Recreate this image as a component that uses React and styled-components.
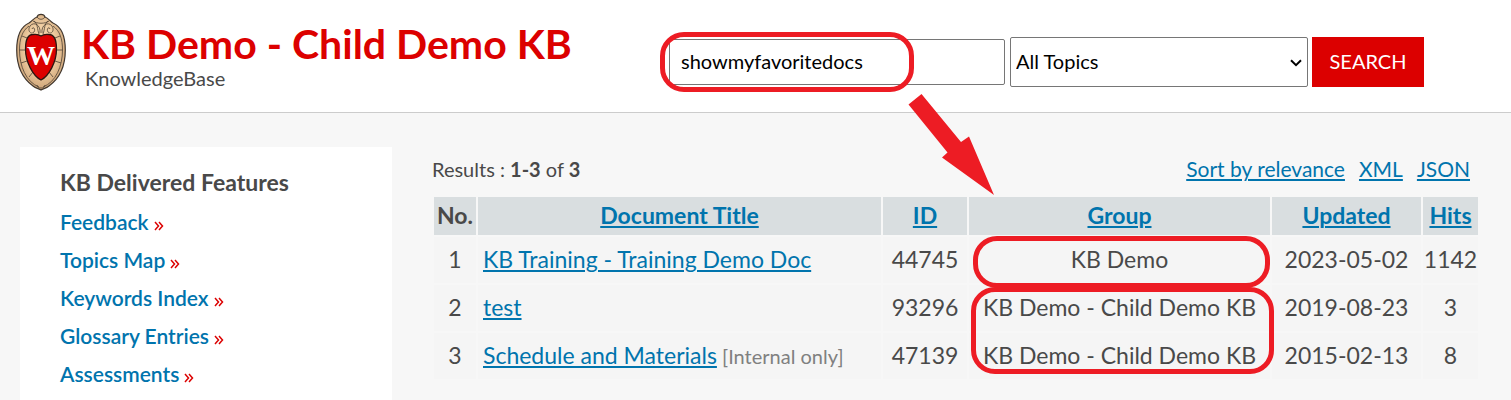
import React, { useState } from 'react'
import styled, { createGlobalStyle } from 'styled-components'

const fonts = {
  primary: "'Lato', 'Liberation Sans', sans-serif",
  serif: "'Liberation Serif', serif",
}

const colors = {
  red: '#dc0000',
  marker: '#ed1c24',
  link: '#0074ad',
  text: '#494949',
  page: '#f7f7f7',
}

const features = [
  'Feedback',
  'Topics Map',
  'Keywords Index',
  'Glossary Entries',
  'Assessments',
]

const docs = [
  {
    title: 'KB Training - Training Demo Doc',
    id: '44745',
    group: 'KB Demo',
    updated: '2023-05-02',
    hits: '1142',
    mark: 'single',
  },
  {
    title: 'test',
    id: '93296',
    group: 'KB Demo - Child Demo KB',
    updated: '2019-08-23',
    hits: '3',
    mark: 'double',
  },
  {
    title: 'Schedule and Materials',
    internal: true,
    id: '47139',
    group: 'KB Demo - Child Demo KB',
    updated: '2015-02-13',
    hits: '8',
  },
]

const App = () => {
  const [query, setQuery] = useState('showmyfavoritedocs')

  return (
    <>
      <GlobalStyle />
      <Header>
        <Brand>
          <Crest />
          <BrandText>
            <SiteTitle>KB Demo - Child Demo KB</SiteTitle>
            <SiteSubtitle>KnowledgeBase</SiteSubtitle>
          </BrandText>
        </Brand>
        <SearchForm onSubmit={(e) => e.preventDefault()}>
          <SearchField>
            <SearchInput
              type="text"
              aria-label="Search term"
              value={query}
              onChange={(e) => setQuery(e.target.value)}
            />
            <SearchMark />
            <Arrow />
          </SearchField>
          <TopicField>
            <TopicSelect aria-label="Topics" defaultValue="all">
              <option value="all">All Topics</option>
            </TopicSelect>
            <Chevron viewBox="0 0 12 8" aria-hidden="true">
              <path d="M1 1.3 6 6.2 11 1.3" />
            </Chevron>
          </TopicField>
          <SearchButton type="submit">SEARCH</SearchButton>
        </SearchForm>
      </Header>
      <Body>
        <Sidebar>
          <SidebarTitle>KB Delivered Features</SidebarTitle>
          <FeatureList>
            {features.map((name) => (
              <li key={name}>
                <FeatureLink href="#">
                  {name}
                  <DoubleArrow />
                </FeatureLink>
              </li>
            ))}
          </FeatureList>
        </Sidebar>
        <Results>
          <ResultsBar>
            <span>
              Results : <b>1-3</b> of <b>3</b>
            </span>
            <ResultsLinks>
              <Link href="#">Sort by relevance</Link>
              <Link href="#">XML</Link>
              <Link href="#">JSON</Link>
            </ResultsLinks>
          </ResultsBar>
          <DocTable>
            <colgroup>
              <Col $width={42} />
              <Col />
              <Col $width={84} />
              <Col $width={301} />
              <Col $width={149} />
              <Col $width={55} />
            </colgroup>
            <thead>
              <tr>
                <HeadCell>No.</HeadCell>
                {['Document Title', 'ID', 'Group', 'Updated', 'Hits'].map(
                  (label) => (
                    <HeadCell key={label}>
                      <Link href="#">{label}</Link>
                    </HeadCell>
                  )
                )}
              </tr>
            </thead>
            <tbody>
              {docs.map((doc, index) => (
                <tr key={doc.id}>
                  <Cell>{index + 1}</Cell>
                  <Cell $align="left">
                    <Link href="#">{doc.title}</Link>
                    {doc.internal && <Internal> [Internal only]</Internal>}
                  </Cell>
                  <Cell>{doc.id}</Cell>
                  <Cell>
                    {doc.group}
                    {doc.mark === 'single' && <GroupMark />}
                    {doc.mark === 'double' && <GroupPairMark />}
                  </Cell>
                  <Cell>{doc.updated}</Cell>
                  <Cell>{doc.hits}</Cell>
                </tr>
              ))}
            </tbody>
          </DocTable>
        </Results>
      </Body>
    </>
  )
}

export default App

const Crest = () => (
  <CrestSvg viewBox="0 0 50 80" role="img" aria-label="University crest">
    <defs>
      <radialGradient id="stone" cx="50%" cy="45%" r="60%">
        <stop offset="0.5" stopColor="#f0cfa4" />
        <stop offset="1" stopColor="#c69a6d" />
      </radialGradient>
    </defs>
    <path
      d="M25 78C23 76.500 20 76.500 17 74C6 66 0.700 53 0.700 38C0.700 26 4 15 13 11C16 9 18 6 21 5C22 1.500 28 1.500 29 5C32 6 34 9 37 11C46 15 49.300 26 49.300 38C49.300 53 44 66 33 74C30 76.500 27 76.500 25 78Z"
      fill="url(#stone)"
      stroke="#42382f"
      strokeWidth="1.2"
    />
    <g fill="none" stroke="#4d4034" strokeWidth="0.8">
      <path d="M23 75C10 70 3.500 54 3.500 38C3.500 27 6 19 13 14M27 75C40 70 46.500 54 46.500 38C46.500 27 44 19 37 14" />
      <path d="M21 5C23 8 27 8 29 5M17 9C21 12 29 12 33 9M21 73C21 77 29 77 29 73" />
      <path d="M24 21C25 13 18 9 14 14C11 19 15 23 18 20C20 17 17 14 16 17M23 22C21 17 22 12 18 9" />
      <path d="M26 21C25 13 32 9 36 14C39 19 35 23 32 20C30 17 33 14 34 17M27 22C29 17 28 12 32 9" />
      <path d="M6 24 11 26M3.500 38H9M5 51 11 49M13 65 17 60M44 24 39 26M46.500 38H41M45 51 39 49M37 65 33 60" />
    </g>
    <path
      d="M25 68C17 64 9.500 50 9.500 37C9.500 27 12 22.500 17 22.500C21 22 23 22.500 25 24C27 22.500 29 22 33 22.500C38 22.500 40.500 27 40.500 37C40.500 50 33 64 25 68Z"
      fill="#dc0000"
      stroke="#2d1712"
      strokeWidth="1.3"
    />
    <CrestLetter x="25" y="53" textAnchor="middle">
      W
    </CrestLetter>
  </CrestSvg>
)

const DoubleArrow = () => (
  <DoubleArrowSvg viewBox="0 0 10 10" aria-hidden="true">
    <path d="M1 1 4.500 5 1 9M5 1 8.500 5 5 9" />
  </DoubleArrowSvg>
)

const Arrow = () => (
  <ArrowSvg viewBox="0 0 86 101" aria-hidden="true">
    <path d="M13.500 0 53 48 61 42.500 86 101 34 63.500 39.500 58.500 0.500 10.500Z" />
  </ArrowSvg>
)

const GlobalStyle = createGlobalStyle`
  * {
    box-sizing: border-box;
  }

  body {
    margin: 0;
    background: ${colors.page};
    color: ${colors.text};
    font-family: ${fonts.primary};
    font-size: 20px;
    line-height: 24px;
  }
`

const Header = styled.header`
  display: grid;
  grid-template-columns: 653fr 842fr;
  align-items: start;
  padding: 12px 0 20px 16px;
  background: #fff;
  border-bottom: 1px solid #ccc;
`

const Brand = styled.div`
  display: flex;
  gap: 15px;
`

const CrestSvg = styled.svg`
  flex: none;
  width: 50px;
  height: 80px;
`

const CrestLetter = styled.text`
  fill: #fff;
  font-family: ${fonts.serif};
  font-size: 28px;
  font-weight: 700;
`

const BrandText = styled.div`
  padding-top: 10px;
`

const SiteTitle = styled.h1`
  margin: 0;
  color: ${colors.red};
  font-size: 41px;
  font-weight: 700;
  line-height: 44px;
  white-space: nowrap;
`

const SiteSubtitle = styled.div`
  padding-left: 4px;
`

const SearchForm = styled.form`
  display: flex;
  align-items: center;
  gap: 4px;
  padding-top: 25px;
`

const SearchField = styled.div`
  position: relative;
  width: 336px;
  margin-right: 1px;
`

const controlFont = `
  font-family: ${fonts.primary};
  font-size: 20px;
`

const SearchInput = styled.input`
  ${controlFont}
  display: block;
  width: 100%;
  height: 46px;
  padding: 0 11px 2px;
  border: 1px solid #767676;
  border-radius: 2px;
  color: #000;
`

const TopicField = styled.div`
  position: relative;
  width: 298px;
`

const TopicSelect = styled.select`
  ${controlFont}
  display: block;
  appearance: none;
  width: 100%;
  height: 50px;
  padding: 0 24px 2px 5px;
  border: 1px solid #767676;
  border-radius: 2px;
  background: #fff;
  color: #000;
`

const Chevron = styled.svg`
  position: absolute;
  top: 22px;
  right: 6px;
  width: 12px;
  height: 8px;
  fill: none;
  stroke: #000;
  stroke-width: 2;
  pointer-events: none;
`

const SearchButton = styled.button`
  ${controlFont}
  width: 112px;
  height: 50px;
  padding: 0 0 2px;
  border: 0;
  background: ${colors.red};
  color: #fff;
`

// markers that lie over the page
const Mark = styled.span`
  position: absolute;
  z-index: 1;
  border: 5px solid ${colors.marker};
  border-radius: 24px;
  pointer-events: none;
`

const SearchMark = styled(Mark)`
  top: -7px;
  left: -9px;
  width: 254px;
  height: 60px;
`

const GroupMark = styled(Mark)`
  top: -1px;
  left: 4px;
  right: 0;
  height: 52px;
`

const GroupPairMark = styled(Mark)`
  top: 2px;
  left: 2px;
  right: -4px;
  height: 87px;
`

const ArrowSvg = styled.svg`
  position: absolute;
  top: 55px;
  left: 239px;
  z-index: 1;
  width: 86px;
  height: 101px;
  fill: ${colors.marker};
  pointer-events: none;
`

const Body = styled.main`
  display: grid;
  grid-template-columns: 372fr 1048fr;
  gap: 40px;
  padding: 34px 31px 0 20px;
`

const Sidebar = styled.nav`
  padding: 23px 40px 7px;
  background: #fff;
`

const SidebarTitle = styled.h2`
  margin: 0 0 9px;
  font-size: 23px;
  font-weight: 700;
  line-height: 24px;
`

const FeatureList = styled.ul`
  margin: 0;
  padding: 0;
  list-style: none;
  font-size: 21px;
  line-height: 38px;
`

const FeatureLink = styled.a`
  color: ${colors.link};
  font-weight: 600;
  text-decoration: none;
`

const DoubleArrowSvg = styled.svg`
  width: 10px;
  height: 10px;
  margin-left: 5px;
  fill: none;
  stroke: ${colors.red};
  stroke-width: 1.5;
  vertical-align: -1px;
`

const Results = styled.section`
  padding-top: 10px;
`

const ResultsBar = styled.div`
  display: flex;
  justify-content: space-between;
  padding: 0 10px 0 0;
`

const ResultsLinks = styled.div`
  display: flex;
  gap: 14px;
  font-size: 21px;
`

const Link = styled.a`
  color: ${colors.link};
  text-decoration-thickness: 2px;
  text-underline-offset: 2px;
`

const DocTable = styled.table`
  width: 100%;
  margin-top: 14px;
  border-spacing: 2px;
  table-layout: fixed;
  font-size: 23px;
`

const Col = styled.col`
  width: ${(props) => (props.$width ? `${props.$width}px` : 'auto')};
`

const HeadCell = styled.th`
  height: 38px;
  padding: 0 0 2px;
  background: #d9dee0;
  font-weight: 700;
`

const Cell = styled.td`
  position: relative;
  height: 46px;
  padding: 0 5px 2px;
  background: #f5f5f5;
  text-align: ${(props) => props.$align || 'center'};
  white-space: nowrap;

  &:last-child {
    padding: 0 0 2px;
  }
`

const Internal = styled.span`
  color: #808080;
  font-size: 20px;
`
